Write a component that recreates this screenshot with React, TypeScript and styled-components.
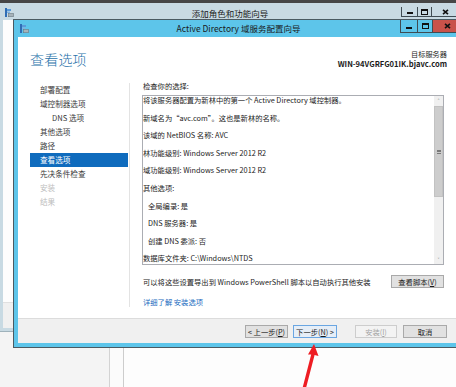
import React from "react";
import styled, { createGlobalStyle } from "styled-components";

const GlobalStyle = createGlobalStyle`
  html, body {
    margin: 0;
    padding: 0;
  }
  body {
    width: 456px;
    height: 387px;
    overflow: hidden;
    font-family: "Noto Sans CJK SC", "Noto Sans", sans-serif;
    color: #1b1b1b;
  }
  * {
    box-sizing: border-box;
  }
`;

const Desktop = styled.div`
  position: relative;
  width: 456px;
  height: 387px;
  overflow: hidden;
  border-top: 3px solid #464646;
  display: flex;
`;

const BackPane = styled.div<{ $w?: number; $bg: string; $line?: string }>`
  ${(p) => (p.$w ? `width: ${p.$w}px;` : "flex: 1;")}
  background: ${(p) => p.$bg};
  ${(p) => (p.$line ? `border-right: 1px solid ${p.$line};` : "")}
`;

const Window = styled.div<{ $left: number; $top: number; $h: number; $w: number; $frame: string }>`
  position: absolute;
  left: ${(p) => p.$left}px;
  top: ${(p) => p.$top}px;
  width: ${(p) => p.$w}px;
  height: ${(p) => p.$h}px;
  background: ${(p) => p.$frame};
  display: flex;
  flex-direction: column;
`;

const OuterWin = styled(Window)`
  border-bottom: 1px solid #9fb2bb;
`;

const InnerWin = styled(Window)`
  border: 1px solid #4a5a62;
`;

const TitleBar = styled.div<{ $h: number }>`
  height: ${(p) => p.$h}px;
  flex: none;
  display: grid;
  grid-template-columns: 1fr auto 1fr;
`;

const IconCell = styled.div<{ $pl: number; $pt: number }>`
  padding-left: ${(p) => p.$pl}px;
  padding-top: ${(p) => p.$pt}px;
  display: flex;
  align-items: flex-start;
`;

const TitleText = styled.div<{ $pt: number }>`
  padding-top: ${(p) => p.$pt}px;
  font-size: 8.5px;
  line-height: 11px;
  color: #1a1a1a;
  white-space: nowrap;
`;

const Caption = styled.div<{ $mt: number }>`
  justify-self: end;
  margin-top: ${(p) => p.$mt}px;
  display: flex;
`;

const CapButton = styled.div<{ $w: number; $h: number; $bg: string }>`
  width: ${(p) => p.$w}px;
  height: ${(p) => p.$h}px;
  background: ${(p) => p.$bg};
  border: 1px solid #3f4c53;
  border-top: none;
  margin-left: -1px;
  display: flex;
  align-items: center;
  justify-content: center;
`;

const MinGlyph = styled.div`
  width: 6px;
  height: 2px;
  margin-top: 3px;
  background: #111;
`;

const MaxGlyph = styled.div`
  width: 7px;
  height: 6px;
  border: 1px solid #111;
  border-top-width: 2px;
`;

const Frame = styled.div<{ $pad: string }>`
  flex: 1;
  display: flex;
  flex-direction: column;
  padding: ${(p) => p.$pad};
  min-height: 0;
`;

const OuterClient = styled.div`
  flex: 1;
  background: #fdfdfd;
`;

const OuterFooter = styled.div`
  height: 26px;
  background: #f0f0f0;
  border-top: 1px solid #e0e0e0;
`;

const Client = styled.div`
  flex: 1;
  background: #ffffff;
  display: flex;
  flex-direction: column;
`;

const Header = styled.div`
  height: 44px;
  padding: 14px 12px 0 12px;
  display: flex;
  justify-content: space-between;
  align-items: flex-start;
`;

const PageTitle = styled.div`
  font-size: 14px;
  line-height: 17px;
  font-weight: 300;
  color: #2872aa;
  letter-spacing: 0.2px;
`;

const Target = styled.div`
  margin-top: -1.5px;
  text-align: right;
  font-size: 7.2px;
  line-height: 9px;
`;

const Host = styled.div`
  font-weight: 700;
  font-size: 7.6px;
`;

const Body = styled.div`
  flex: 1;
  display: flex;
  padding: 0 15px 11px 12px;
`;

const Nav = styled.div`
  width: 100px;
  margin-top: 2px;
  border-right: 1px solid #e3e3e3;
`;

const NavItem = styled.div<{ $indent?: boolean; $active?: boolean; $disabled?: boolean }>`
  height: 14px;
  line-height: 14px;
  font-size: 7.6px;
  padding-left: ${(p) => (p.$indent ? 22 : 10)}px;
  margin-right: 1px;
  white-space: nowrap;
  background: ${(p) => (p.$active ? "#0f6bbd" : "transparent")};
  color: ${(p) => (p.$active ? "#ffffff" : p.$disabled ? "#bdbdbd" : "#3a3a3a")};
`;

const Content = styled.div`
  flex: 1;
  margin-left: 12px;
  display: flex;
  flex-direction: column;
  min-width: 0;
`;

const Label = styled.div`
  height: 10px;
  line-height: 10px;
  font-size: 7.3px;
  padding-left: 1px;
  margin-bottom: 4px;
`;

const Box = styled.div`
  height: 170px;
  border: 1px solid #abadb3;
  display: flex;
  flex: none;
`;

const BoxText = styled.div`
  flex: 1;
  overflow: hidden;
  padding-top: 0;
`;

const Line = styled.div<{ $indent?: boolean }>`
  height: 9px;
  line-height: 9px;
  margin-bottom: 8.6px;
  font-size: 7.3px;
  white-space: nowrap;
  padding-left: ${(p) => (p.$indent ? 5 : 0)}px;
`;

const Scroll = styled.div`
  width: 9px;
  background: #f0f0f0;
  display: flex;
  flex-direction: column;
`;

const ScrollArrow = styled.div`
  height: 9px;
  display: flex;
  align-items: center;
  justify-content: center;
  font-size: 6px;
  color: #606060;
`;

const Thumb = styled.div`
  height: 91px;
  margin-top: 1px;
  background: #cdcdcd;
  border: 1px solid #c2c2c2;
  display: flex;
  align-items: center;
  justify-content: center;
`;

const Grip = styled.div`
  width: 4px;
  height: 4px;
  border-top: 1px solid #7a7a7a;
  border-bottom: 1px solid #7a7a7a;
  position: relative;
  &::after {
    content: "";
    position: absolute;
    left: 0;
    right: 0;
    top: 0.5px;
    height: 1px;
    background: #7a7a7a;
  }
`;

const Track = styled.div`
  flex: 1;
`;

const ExportRow = styled.div`
  height: 13px;
  margin-top: 10px;
  display: flex;
  align-items: center;
  justify-content: space-between;
  font-size: 7.3px;
  padding-left: 1px;
`;

const Link = styled.div`
  margin-top: 10px;
  height: 9px;
  line-height: 9px;
  font-size: 7.3px;
  color: #1c6cc0;
  padding-left: 1px;
`;

const Footer = styled.div`
  height: 25px;
  flex: none;
  background: #f0f0f0;
  border-top: 1px solid #dcdcdc;
  padding: 6px 12px 0 0;
  display: flex;
  justify-content: flex-end;
  align-items: flex-start;
`;

const Btn = styled.div<{ $w: number; $ml?: number; $focus?: boolean; $disabled?: boolean }>`
  width: ${(p) => p.$w}px;
  height: 13px;
  margin-left: ${(p) => p.$ml ?? 0}px;
  display: flex;
  align-items: center;
  justify-content: center;
  font-size: 7.3px;
  white-space: nowrap;
  background: ${(p) => (p.$disabled ? "#f3f3f3" : p.$focus ? "#e6eef7" : "#e1e1e1")};
  border: 1px solid ${(p) => (p.$disabled ? "#cdcdcd" : p.$focus ? "#6aa6e2" : "#a9a9a9")};
  color: ${(p) => (p.$disabled ? "#a3a3a3" : "#1b1b1b")};
  u {
    text-underline-offset: 1px;
  }
`;

const Arrow = styled.svg`
  position: absolute;
  left: 296px;
  top: 336px;
`;

const ServerIcon = () => (
  <svg width="9" height="9" viewBox="0 0 9 9">
    <rect x="0" y="0" width="2" height="9" fill="#2f6db5" />
    <rect x="2" y="1" width="4" height="2" fill="#5a9ad8" />
    <rect x="2" y="3.5" width="3" height="1.5" fill="#7fb2e2" />
    <rect x="3.5" y="5.5" width="5" height="3.2" fill="#a7b3ba" stroke="#6b7a82" strokeWidth="0.6" />
  </svg>
);

const CloseGlyph = () => (
  <svg width="7" height="6" viewBox="0 0 7 6">
    <path d="M1 0.8 L6 5.2 M6 0.8 L1 5.2" stroke="#111" strokeWidth="1.6" />
  </svg>
);

interface CapProps {
  bg: string;
  closeBg: string;
  h: number;
  widths: [number, number, number];
}

const CaptionButtons = ({ bg, closeBg, h, widths }: CapProps) => (
  <>
    <CapButton $w={widths[0]} $h={h} $bg={bg}>
      <MinGlyph />
    </CapButton>
    <CapButton $w={widths[1]} $h={h} $bg={bg}>
      <MaxGlyph />
    </CapButton>
    <CapButton $w={widths[2]} $h={h} $bg={closeBg}>
      <CloseGlyph />
    </CapButton>
  </>
);

const navItems = [
  { t: "部署配置" },
  { t: "域控制器选项" },
  { t: "DNS 选项", indent: true },
  { t: "其他选项" },
  { t: "路径" },
  { t: "查看选项", active: true },
  { t: "先决条件检查" },
  { t: "安装", disabled: true },
  { t: "结果", disabled: true },
];

const lines = [
  { t: "将该服务器配置为新林中的第一个 Active Directory 域控制器。" },
  { t: "新域名为“avc.com”。这也是新林的名称。" },
  { t: "该域的 NetBIOS 名称: AVC" },
  { t: "林功能级别: Windows Server 2012 R2" },
  { t: "域功能级别: Windows Server 2012 R2" },
  { t: "其他选项:" },
  { t: "全局编录: 是", indent: true },
  { t: "DNS 服务器: 是", indent: true },
  { t: "创建 DNS 委派: 否", indent: true },
  { t: "数据库文件夹: C:\\Windows\\NTDS" },
];

export default function App() {
  return (
    <>
      <GlobalStyle />
      <Desktop>
        <BackPane $w={110} $bg="#f4f4f4" $line="#d3d3d3" />
        <BackPane $w={14} $bg="#fbfbfb" $line="#cdcdcd" />
        <BackPane $bg="#fdfdfd" />

        <OuterWin $left={0} $top={0} $w={460} $h={329} $frame="#c8dae3">
          <TitleBar $h={17}>
            <IconCell $pl={5} $pt={5}>
              <ServerIcon />
            </IconCell>
            <TitleText $pt={5}>添加角色和功能向导</TitleText>
            <Caption $mt={4}>
              <CaptionButtons bg="#c8dae3" closeBg="#c8dae3" h={10} widths={[17, 15, 29]} />
            </Caption>
          </TitleBar>
          <Frame $pad="0 3px 3px 3px">
            <OuterClient />
            <OuterFooter />
          </Frame>
        </OuterWin>

        <InnerWin $left={13} $top={16} $w={451} $h={329} $frame="#5dc5ea">
          <TitleBar $h={17}>
            <IconCell $pl={6} $pt={4}>
              <ServerIcon />
            </IconCell>
            <TitleText $pt={3}>Active Directory 域服务配置向导</TitleText>
            <Caption $mt={0}>
              <CaptionButtons bg="#5dc5ea" closeBg="#c9524a" h={13} widths={[18, 16, 31]} />
            </Caption>
          </TitleBar>
          <Frame $pad="0 4px 4px 4px">
            <Client>
              <Header>
                <PageTitle>查看选项</PageTitle>
                <Target>
                  <div>目标服务器</div>
                  <Host>WIN-94VGRFG01IK.bjavc.com</Host>
                </Target>
              </Header>
              <Body>
                <Nav>
                  {navItems.map((n) => (
                    <NavItem key={n.t} $indent={n.indent} $active={n.active} $disabled={n.disabled}>
                      {n.t}
                    </NavItem>
                  ))}
                </Nav>
                <Content>
                  <Label>检查你的选择:</Label>
                  <Box>
                    <BoxText>
                      {lines.map((l) => (
                        <Line key={l.t} $indent={l.indent}>
                          {l.t}
                        </Line>
                      ))}
                    </BoxText>
                    <Scroll>
                      <ScrollArrow>˄</ScrollArrow>
                      <Thumb>
                        <Grip />
                      </Thumb>
                      <Track />
                      <ScrollArrow>˅</ScrollArrow>
                    </Scroll>
                  </Box>
                  <ExportRow>
                    <span>可以将这些设置导出到 Windows PowerShell 脚本以自动执行其他安装</span>
                    <Btn $w={53}>
                      查看脚本(<u>V</u>)
                    </Btn>
                  </ExportRow>
                  <Link>详细了解 安装选项</Link>
                </Content>
              </Body>
              <Footer>
                <Btn $w={43}>
                  &lt; 上一步(<u>P</u>)
                </Btn>
                <Btn $w={44} $ml={5} $focus>
                  下一步(<u>N</u>) &gt;
                </Btn>
                <Btn $w={42} $ml={18} $disabled>
                  安装(<u>I</u>)
                </Btn>
                <Btn $w={44} $ml={6}>
                  取消
                </Btn>
              </Footer>
            </Client>
          </Frame>
        </InnerWin>

        <Arrow width="26" height="51" viewBox="0 0 26 51">
          <polygon points="18,5 22.5,17 18.6,16 9.5,51 6,51 15.2,15.6 12,15.5" fill="#ee1d23" />
        </Arrow>
      </Desktop>
    </>
  );
}
